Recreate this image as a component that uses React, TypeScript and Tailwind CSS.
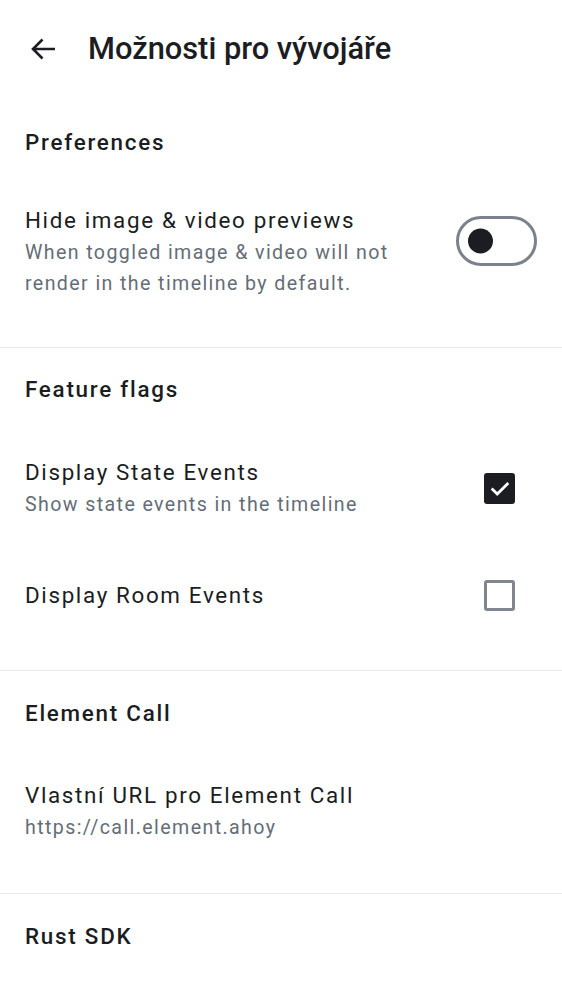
import React, { useState } from "react";

const font = { fontFamily: "Roboto, 'Noto Sans', sans-serif" };

function SectionTitle({ children, h }: { children: React.ReactNode; h: string }) {
  return (
    <div className={`flex items-center px-[25px] ${h}`}>
      <h2 className="text-[22.4px] font-medium leading-none tracking-[1.75px] text-[#1b1d22]">{children}</h2>
    </div>
  );
}

function Toggle({ on, onChange }: { on: boolean; onChange: () => void }) {
  return (
    <button
      onClick={onChange}
      className="relative h-[50px] w-[81px] shrink-0 rounded-full border-[3px] border-[#7b828c] bg-white"
    >
      <span
        className={`absolute top-1/2 h-[25px] w-[25px] -translate-y-1/2 rounded-full bg-[#1b1d22] ${
          on ? "left-[40px]" : "left-[9px]"
        }`}
      />
    </button>
  );
}

function Checkbox({ checked, onChange }: { checked: boolean; onChange: () => void }) {
  return (
    <button
      onClick={onChange}
      className={`flex h-[31px] w-[31px] shrink-0 items-center justify-center rounded-[3px] ${
        checked ? "bg-[#1b1d22]" : "border-[3px] border-[#7f8690] bg-white"
      }`}
    >
      {checked && (
        <svg width="22" height="22" viewBox="0 0 24 24" fill="none">
          <path d="M4 12.5l5 5L20 6.5" stroke="white" strokeWidth="3" strokeLinecap="square" />
        </svg>
      )}
    </button>
  );
}

const title = "text-[22.4px] leading-[31px] tracking-[1.65px] text-[#1b1d22]";
const desc = "text-[19.6px] leading-[31px] tracking-[1.4px] text-[#656d77]";

export default function App() {
  const [hidePreviews, setHidePreviews] = useState(false);
  const [stateEvents, setStateEvents] = useState(true);
  const [roomEvents, setRoomEvents] = useState(false);

  return (
    <div className="min-h-screen w-[562px] bg-white" style={font}>
      <header className="flex h-[98px] items-center">
        <button className="ml-[30px] flex h-[26px] w-[26px] items-center justify-center">
          <svg width="26" height="24" viewBox="0 0 26 24" fill="none">
            <path d="M25 12H3.5M12.5 2.5L3 12l9.5 9.5" stroke="#1b1d22" strokeWidth="2.6" />
          </svg>
        </button>
        <h1 className="ml-[32px] text-[30.8px] font-medium leading-none text-[#1b1d22]">
          Možnosti pro vývojáře
        </h1>
      </header>

      <section className="border-b border-[#e8e9eb]">
        <SectionTitle h="h-[88px]">Preferences</SectionTitle>
        <div className="flex items-start justify-between pb-[48px] pl-[25px] pr-[25px] pt-[19px]">
          <div className="w-[400px]">
            <p className={title}>Hide image &amp; video previews</p>
            <p className={`mt-[1px] ${desc}`}>
              When toggled image &amp; video will not render in the timeline by default.
            </p>
          </div>
          <div className="mt-[11px]">
            <Toggle on={hidePreviews} onChange={() => setHidePreviews(!hidePreviews)} />
          </div>
        </div>
      </section>

      <section className="border-b border-[#e8e9eb] pb-[27px]">
        <SectionTitle h="h-[82px]">Feature flags</SectionTitle>
        <div className="flex items-center justify-between py-[27px] pl-[25px] pr-[47px]">
          <div>
            <p className={title}>Display State Events</p>
            <p className={`mt-[1px] ${desc}`}>Show state events in the timeline</p>
          </div>
          <Checkbox checked={stateEvents} onChange={() => setStateEvents(!stateEvents)} />
        </div>
        <div className="flex min-h-[96px] items-center justify-between pl-[25px] pr-[47px]">
          <p className={title}>Display Room Events</p>
          <Checkbox checked={roomEvents} onChange={() => setRoomEvents(!roomEvents)} />
        </div>
      </section>

      <section className="border-b border-[#e8e9eb] pb-[50px]">
        <SectionTitle h="h-[84px]">Element Call</SectionTitle>
        <div className="px-[25px] pt-[25px]">
          <p className={title}>Vlastní URL pro Element Call</p>
          <p className={`mt-[1px] ${desc}`}>https://call.element.ahoy</p>
        </div>
      </section>

      <section>
        <SectionTitle h="h-[84px]">Rust SDK</SectionTitle>
      </section>
    </div>
  );
}
